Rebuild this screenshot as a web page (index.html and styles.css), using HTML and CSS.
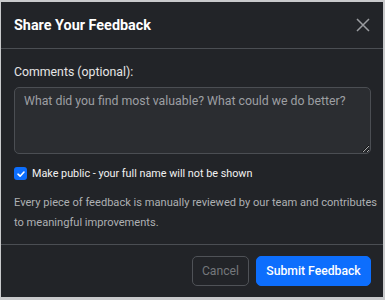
FILE: index.html
```html
<!DOCTYPE html>
<html>
<head>
<meta charset="utf-8">
<link rel="stylesheet" href="styles.css">
</head>
<body>
<div class="dialog">
  <div class="header">
    <h1 class="title">Share Your Feedback</h1>
    <button class="close" aria-label="Close">
      <svg width="14" height="14" viewBox="0 0 14 14"><path d="M1 1L13 13M13 1L1 13" stroke="#9a9ca0" stroke-width="1.5" fill="none"/></svg>
    </button>
  </div>
  <div class="body">
    <label class="label">Comments (optional):</label>
    <textarea class="textarea" placeholder="What did you find most valuable? What could we do better?"></textarea>
    <label class="check">
      <span class="box"><svg width="10" height="10" viewBox="0 0 10 10"><path d="M2 5.2L4.1 7.2L8 3" stroke="#fff" stroke-width="1.6" fill="none" stroke-linecap="round" stroke-linejoin="round"/></svg></span>
      <span>Make public - your full name will not be shown</span>
    </label>
    <p class="note">Every piece of feedback is manually reviewed by our team and contributes to meaningful improvements.</p>
  </div>
  <div class="footer">
    <button class="btn cancel">Cancel</button>
    <button class="btn submit">Submit Feedback</button>
  </div>
</div>
</body>
</html>
```
FILE: styles.css
```css
html, body { margin: 0; padding: 0; }
body {
  background: #c9cacc;
  width: 385px;
  height: 300px;
  font-family: Roboto, "Liberation Sans", sans-serif;
}
.dialog {
  margin: 2px 2px 0 1px;
  height: 295px;
  background: #222428;
  display: flex;
  flex-direction: column;
}
.header {
  height: 46px;
  flex: none;
  display: flex;
  align-items: center;
  justify-content: space-between;
  padding: 0 12px 0 13px;
  border-bottom: 1px solid #4b4e53;
}
.title {
  margin: 0;
  font-family: Roboto, sans-serif;
  font-weight: 700;
  font-size: 14.4px;
  color: #ffffff;
}
.close {
  background: none;
  border: 0;
  padding: 0;
  width: 16px;
  height: 16px;
  display: flex;
  align-items: center;
  justify-content: center;
}
.body {
  padding: 15px 12px 0 13px;
  display: flex;
  flex-direction: column;
  flex: 1;
}
.label {
  color: #e6e6e6;
  font-size: 12.3px;
  line-height: 16px;
  margin-bottom: 7px;
}
.textarea {
  box-sizing: border-box;
  height: 67px;
  width: 100%;
  background: #2b2d31;
  border: 1px solid #4b4e53;
  border-radius: 5px;
  padding: 5px 9px;
  font-family: Roboto, "Liberation Sans", sans-serif;
  font-size: 12.3px;
  line-height: 16px;
  color: #e6e6e6;
  resize: vertical;
  margin: 0;
}
.textarea::placeholder { color: #9d9fa3; }
.check {
  display: flex;
  align-items: center;
  gap: 5px;
  margin-top: 13px;
  font-size: 10.8px;
  color: #f2f2f2;
}
.box {
  width: 13px;
  height: 13px;
  border-radius: 3px;
  background: #0d6efd;
  display: flex;
  align-items: center;
  justify-content: center;
}
.note {
  margin: 13px -10px 0 0;
  font-size: 11.1px;
  line-height: 20px;
  color: #aeb0b3;
}
.footer {
  height: 52px;
  flex: none;
  border-top: 1px solid #4b4e53;
  display: flex;
  align-items: center;
  justify-content: flex-end;
  gap: 7px;
  padding: 0 12px 0 0;
}
.btn {
  height: 30px;
  border-radius: 5px;
  font-family: Roboto, "Liberation Sans", sans-serif;
  font-size: 12.2px;
  padding: 0;
}
.cancel {
  background: transparent;
  border: 1px solid #4f5257;
  color: #74777b;
  width: 57px;
}
.submit {
  background: #0d6efd;
  border: 1px solid #0d6efd;
  color: #ffffff;
  font-weight: 500;
  width: 115px;
}
```
